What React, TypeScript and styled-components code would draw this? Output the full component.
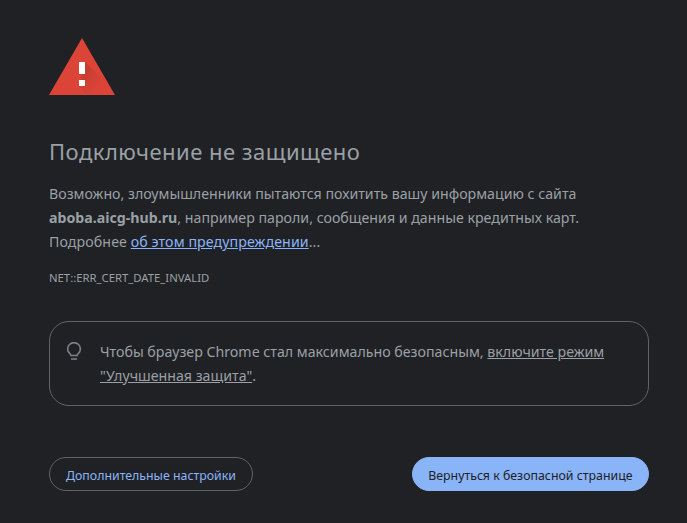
import React from 'react';
import styled, { createGlobalStyle } from 'styled-components';

const GlobalStyle = createGlobalStyle`
	html, body {
		margin: 0;
		height: 100%;
		background: #202124;
		overflow: hidden;
	}
`;

const Page = styled.div`
	box-sizing: border-box;
	width: 687px;
	height: 523px;
	padding: 38px 38px 0 49px;
	background: #202124;
	color: #9aa0a6;
	font-family: 'Noto Sans', 'Open Sans', sans-serif;
	font-size: 14.2px;
`;

const Warning = styled.svg`
	display: block;
	width: 66px;
	height: 57px;
`;

const Title = styled.h1`
	margin: 41px 0 0;
	font-size: 22px;
	font-weight: 400;
	line-height: 30px;
	letter-spacing: 0.47px;
	color: #9aa0a6;
`;

const Message = styled.p`
	margin: 16px 0 0;
	line-height: 24px;
	white-space: nowrap;
`;

const Host = styled.strong`
	font-weight: 700;
`;

const LearnMore = styled.span`
	letter-spacing: 0.09px;
`;

const MoreLink = styled.a`
	color: #8ab4f8;
	text-decoration: underline;
`;

const ErrorCode = styled.div`
	margin-top: 16px;
	font-size: 11.3px;
	line-height: 16px;
	text-transform: uppercase;
`;

const Notice = styled.div`
	box-sizing: border-box;
	display: flex;
	gap: 18px;
	width: 600px;
	height: 85px;
	margin-top: 35px;
	padding: 18px 16px;
	border: 1px solid #5f6368;
	border-radius: 20px;
`;

const BulbIcon = styled.svg`
	flex: none;
	margin-top: 2px;
`;

const NoticeText = styled.div`
	line-height: 24px;
	font-size: 14.2px;
`;

const NoticeLink = styled.a`
	color: #9aa0a6;
	text-decoration: underline;
`;

const Actions = styled.div`
	display: flex;
	justify-content: space-between;
	align-items: center;
	width: 600px;
	margin-top: 51px;
`;

const Button = styled.button<{ $primary?: boolean }>`
	box-sizing: border-box;
	height: 34px;
	padding: 2px ${(p) => (p.$primary ? '15.5px' : '16px')} 0;
	border: 1px solid ${(p) => (p.$primary ? '#8ab4f8' : '#5f6368')};
	border-radius: 17px;
	background: ${(p) => (p.$primary ? '#8ab4f8' : 'transparent')};
	color: ${(p) => (p.$primary ? '#202124' : '#8ab4f8')};
	font-family: inherit;
	font-size: 12.35px;
`;

const App: React.FC = () => (
	<Page>
		<GlobalStyle />
		<Warning viewBox="0 0 66 57">
			<defs>
				<linearGradient id="warning-shadow" x1="30" y1="24" x2="52" y2="46" gradientUnits="userSpaceOnUse">
					<stop offset="0" stopColor="#000" stopOpacity="0.16" />
					<stop offset="1" stopColor="#000" stopOpacity="0" />
				</linearGradient>
			</defs>
			<polygon points="33,0 66,57 0,57" fill="#db4437" />
			<polygon points="36,24 60,48 50,57 38,57 30,48" fill="url(#warning-shadow)" />
			<rect x="30" y="24" width="6" height="12" fill="#fff" />
			<rect x="30" y="42" width="6" height="6" fill="#fff" />
		</Warning>
		<Title>Подключение не защищено</Title>
		<Message>
			Возможно, злоумышленники пытаются похитить вашу информацию с сайта
			<br />
			<Host>aboba.aicg-hub.ru</Host>, например пароли, сообщения и данные кредитных карт.
			<br />
			<LearnMore>
				Подробнее <MoreLink>об этом предупреждении</MoreLink>...
			</LearnMore>
		</Message>
		<ErrorCode>NET::ERR_CERT_DATE_INVALID</ErrorCode>
		<Notice>
			<BulbIcon width="16" height="20" viewBox="0 0 16 20" fill="none" stroke="#7c8186" strokeWidth="1.6">
				<path d="M5 13.500c0-1.500-3.400-2.600-3.400-6.600a6.400 6.300 0 0 1 12.800 0c0 4-3.400 5.100-3.400 6.600z" />
				<path d="M5 17h6" />
			</BulbIcon>
			<NoticeText>
				Чтобы браузер Chrome стал максимально безопасным, <NoticeLink>включите режим</NoticeLink>
				<br />
				<NoticeLink>"Улучшенная защита"</NoticeLink>.
			</NoticeText>
		</Notice>
		<Actions>
			<Button>Дополнительные настройки</Button>
			<Button $primary>Вернуться к безопасной странице</Button>
		</Actions>
	</Page>
);

export default App;
